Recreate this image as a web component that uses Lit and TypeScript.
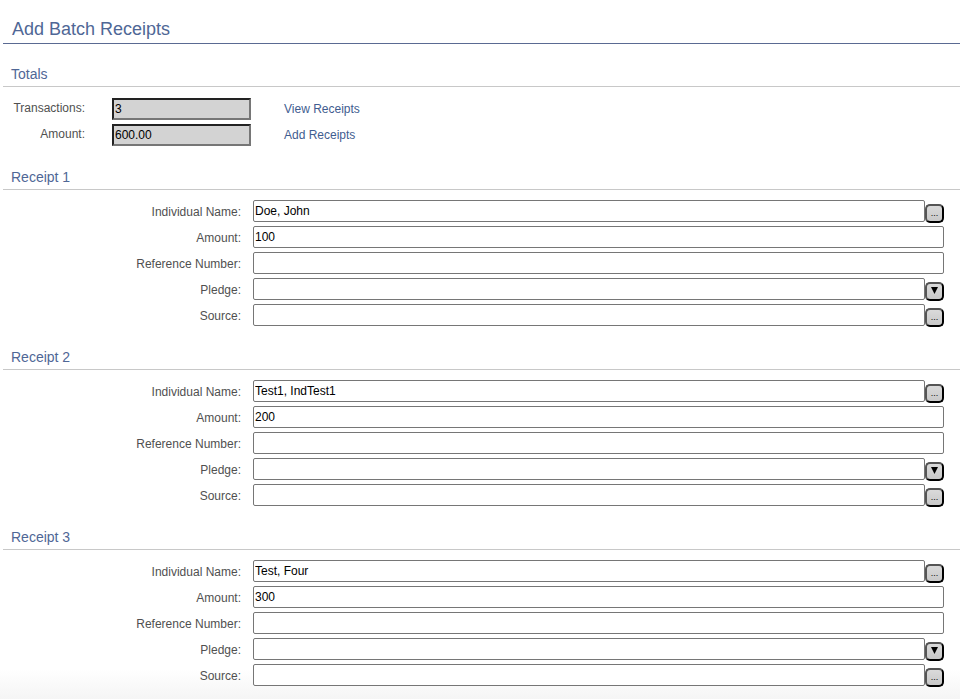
import { LitElement, html, css, nothing } from "lit";
import { customElement, property } from "lit/decorators.js";

interface Receipt {
  name: string;
  amount: string;
}

const RECEIPTS: Receipt[] = [
  { name: "Doe, John", amount: "100" },
  { name: "Test1, IndTest1", amount: "200" },
  { name: "Test, Four", amount: "300" },
];

const heading = css`
  .heading {
    margin: 0;
    padding: 0 8px 4px;
    border-bottom: 1px solid #c8c8c8;
    color: #4f6796;
    font-size: 14px;
    font-weight: 400;
    line-height: 16px;
  }
`;

@customElement("receipt-form")
class ReceiptForm extends LitElement {
  @property({ type: Number }) number = 1;
  @property({ attribute: false }) receipt: Receipt = { name: "", amount: "" };

  static styles = [
    heading,
    css`
      :host {
        display: block;
        padding-top: 19px;
      }
      .fields {
        padding: 10px 16px 0 0;
      }
      .row {
        display: grid;
        grid-template-columns: 238px 1fr auto;
        align-items: start;
        height: 26px;
      }
      .label {
        padding: 5px 0 0;
        color: #505050;
        line-height: 14px;
        text-align: right;
      }
      .field {
        box-sizing: border-box;
        width: 100%;
        height: 22px;
        min-width: 0;
        padding: 0 1px;
        border: 1px solid #767676;
        border-radius: 2px;
        background: #fff;
        color: #000;
        font: inherit;
      }
      .cell {
        padding-left: 12px;
      }
      .pick {
        display: flex;
        align-items: center;
        justify-content: center;
        box-sizing: border-box;
        width: 19px;
        height: 19px;
        margin-top: 4px;
        padding: 0 0 2px;
        border: 2px solid;
        border-color: #555 #000 #000 #555;
        border-radius: 5px;
        background: linear-gradient(#dadada, #c8c8c8);
        color: #000;
        font: 9px "Liberation Sans", Arial, sans-serif;
      }
      .arrow {
        width: 7px;
        height: 7px;
      }
    `,
  ];

  private row(id: string, label: string, value = "", button?: "dots" | "arrow") {
    return html`
      <div class="row">
        <label class="label" for=${id}>${label}:</label>
        <div class="cell"><input class="field" id=${id} type="text" .value=${value} /></div>
        ${button
          ? html`<button class="pick" type="button" aria-label="Choose ${label}">
              ${button === "dots"
                ? "..."
                : html`<svg class="arrow" viewBox="0 0 7 7" aria-hidden="true">
                    <path d="M0 0H7L3.5 7Z" />
                  </svg>`}
            </button>`
          : nothing}
      </div>
    `;
  }

  render() {
    return html`
      <h2 class="heading">Receipt ${this.number}</h2>
      <div class="fields">
        ${this.row("name", "Individual Name", this.receipt.name, "dots")}
        ${this.row("amount", "Amount", this.receipt.amount)}
        ${this.row("reference", "Reference Number")}
        ${this.row("pledge", "Pledge", "", "arrow")}
        ${this.row("source", "Source", "", "dots")}
      </div>
    `;
  }
}

@customElement("app-root")
class AppRoot extends LitElement {
  static styles = [
    heading,
    css`
      :host {
        display: block;
        box-sizing: border-box;
        min-height: 100vh;
        padding-left: 3px;
        background: linear-gradient(to top, #f5f5f5, #fff 30px);
        font: 12px "Liberation Sans", Arial, sans-serif;
      }
      .title {
        margin: 0;
        padding: 18px 9px 3px;
        border-bottom: 1px solid #5a6a92;
        color: #4f6796;
        font-size: 18px;
        font-weight: 400;
        line-height: 22px;
      }
      .totals {
        padding-top: 22px;
      }
      .summary {
        padding-top: 11px;
      }
      .row {
        display: grid;
        grid-template-columns: 82px 139px auto;
        column-gap: 27px;
        align-items: start;
        justify-content: start;
        height: 26px;
      }
      .label {
        padding-top: 3px;
        color: #505050;
        line-height: 14px;
        text-align: right;
      }
      .total {
        box-sizing: border-box;
        width: 100%;
        height: 22px;
        padding: 0 1px;
        border: 2px solid;
        border-color: #222 #767676 #767676 #222;
        background: #d3d3d3;
        color: #000;
        font: inherit;
      }
      .link {
        padding: 4px 0 0 6px;
        color: #3f5d90;
        line-height: 14px;
        text-decoration: none;
      }
    `,
  ];

  render() {
    return html`
      <main>
        <h1 class="title">Add Batch Receipts</h1>
        <section class="totals">
          <h2 class="heading">Totals</h2>
          <div class="summary">
            <div class="row">
              <label class="label" for="transactions">Transactions:</label>
              <input class="total" id="transactions" type="text" readonly value="3" />
              <a class="link" href="#view">View Receipts</a>
            </div>
            <div class="row">
              <label class="label" for="total-amount">Amount:</label>
              <input class="total" id="total-amount" type="text" readonly value="600.00" />
              <a class="link" href="#add">Add Receipts</a>
            </div>
          </div>
        </section>
        ${RECEIPTS.map(
          (receipt, i) =>
            html`<receipt-form .number=${i + 1} .receipt=${receipt}></receipt-form>`,
        )}
      </main>
    `;
  }
}
